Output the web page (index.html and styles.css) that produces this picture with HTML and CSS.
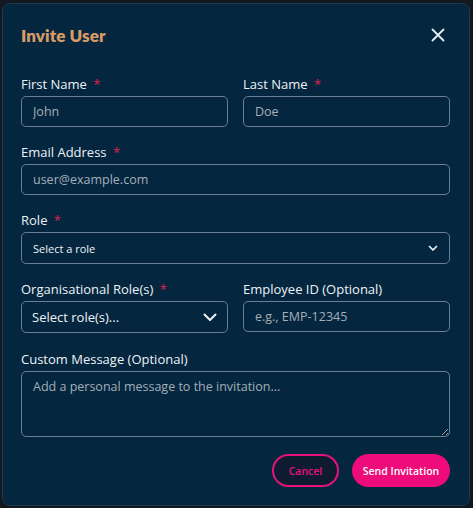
FILE: index.html
```html
<!DOCTYPE html>
<html lang="en">
<head>
<meta charset="utf-8">
<title>Invite User</title>
<link rel="stylesheet" href="styles.css">
</head>
<body>
<div class="modal">
  <div class="header">
    <h2 class="title">Invite User</h2>
    <button class="close" aria-label="Close">
      <svg width="14" height="14" viewBox="0 0 14 14"><path d="M1.5 1.5 L12.5 12.5 M12.5 1.5 L1.5 12.5" stroke="#e8edf2" stroke-width="1.8" stroke-linecap="round" fill="none"/></svg>
    </button>
  </div>
  <form class="form">
    <div class="row">
      <div class="field">
        <label class="label">First Name <span class="req">*</span></label>
        <input class="input" type="text" placeholder="John">
      </div>
      <div class="field">
        <label class="label">Last Name <span class="req">*</span></label>
        <input class="input" type="text" placeholder="Doe">
      </div>
    </div>
    <div class="field">
      <label class="label">Email Address <span class="req">*</span></label>
      <input class="input" type="text" placeholder="user@example.com">
    </div>
    <div class="field">
      <label class="label">Role <span class="req">*</span></label>
      <div class="select select-sm">
        <span>Select a role</span>
        <svg width="10" height="7" viewBox="0 0 10 7"><path d="M1.5 1.5 L5 5 L8.5 1.5" stroke="#f0f3f6" stroke-width="1.7" fill="none" stroke-linecap="round" stroke-linejoin="round"/></svg>
      </div>
    </div>
    <div class="row">
      <div class="field">
        <label class="label">Organisational Role(s) <span class="req">*</span></label>
        <div class="select select-lg">
          <span>Select role(s)...</span>
          <svg width="14" height="9" viewBox="0 0 14 9"><path d="M1.5 1.5 L7 7 L12.5 1.5" stroke="#f0f3f6" stroke-width="2" fill="none" stroke-linecap="round" stroke-linejoin="round"/></svg>
        </div>
      </div>
      <div class="field">
        <label class="label">Employee ID (Optional)</label>
        <input class="input" type="text" placeholder="e.g., EMP-12345">
      </div>
    </div>
    <div class="field field-msg">
      <label class="label">Custom Message (Optional)</label>
      <textarea class="textarea" placeholder="Add a personal message to the invitation..."></textarea>
    </div>
    <div class="actions">
      <button type="button" class="btn btn-cancel">Cancel</button>
      <button type="button" class="btn btn-send">Send Invitation</button>
    </div>
  </form>
</div>
</body>
</html>
```
FILE: styles.css
```css
* { box-sizing: border-box; }
html, body { margin: 0; padding: 0; }
body {
  background: #111820;
  font-family: "Open Sans", "Noto Sans", sans-serif;
  width: 473px;
  height: 508px;
  overflow: hidden;
}
.modal {
  margin: 3px 3px 0 2px;
  width: 468px;
  height: 503px;
  background: #04263f;
  border: 1px solid #1f3a52;
  border-radius: 8px;
  padding: 19px 19px 0 18px;
}
.header {
  display: flex;
  justify-content: space-between;
  align-items: center;
  height: 24px;
}
.title {
  margin: 0;
  font-family: "Lato", "Open Sans", sans-serif;
  font-weight: 800;
  font-size: 17px;
  color: #d99b65;
  letter-spacing: 0.1px;
}
.close {
  background: none;
  border: 0;
  padding: 0;
  margin-right: 5px;
  width: 14px;
  height: 14px;
  display: flex;
}
.form {
  margin-top: 27px;
  display: flex;
  flex-direction: column;
  gap: 15px;
}
.row {
  display: flex;
  gap: 15px;
}
.row .field { flex: 1; }
.field {
  display: flex;
  flex-direction: column;
  gap: 2px;
}
.field-msg { margin-top: 1px; }
.label {
  font-size: 13px;
  line-height: 20px;
  font-weight: 500;
  color: #eef2f6;
}
.req {
  color: #e0224f;
  margin-left: 3px;
}
.input, .select, .textarea {
  border: 1px solid #6b7f93;
  border-radius: 5px;
  background: transparent;
  color: #eef2f6;
  font-family: "Open Sans", "Noto Sans", sans-serif;
}
.input {
  height: 31px;
  padding: 0 11px;
  font-size: 12.5px;
  outline: none;
}
.input::placeholder, .textarea::placeholder { color: #a4aeb9; }
.select {
  height: 32px;
  display: flex;
  align-items: center;
  justify-content: space-between;
}
.select-sm {
  padding: 0 11px 0 11px;
  font-size: 11px;
  font-weight: 500;
}
.select-lg {
  padding: 0 10px 0 10px;
  font-size: 13px;
  font-weight: 500;
}
.textarea {
  height: 66px;
  padding: 6px 11px;
  font-size: 12.5px;
  resize: vertical;
  outline: none;
}
.actions {
  display: flex;
  justify-content: flex-end;
  gap: 13px;
  margin-top: 2px;
}
.btn {
  height: 33px;
  border-radius: 17px;
  font-family: "Open Sans", "Noto Sans", sans-serif;
  font-size: 10.5px;
  font-weight: 600;
  cursor: pointer;
}
.btn-cancel {
  width: 67px;
  background: #0f1b30;
  border: 2px solid #e4137a;
  color: #e4137a;
}
.btn-send {
  width: 98px;
  background: #ee0b7a;
  border: 0;
  color: #ffffff;
}
```
